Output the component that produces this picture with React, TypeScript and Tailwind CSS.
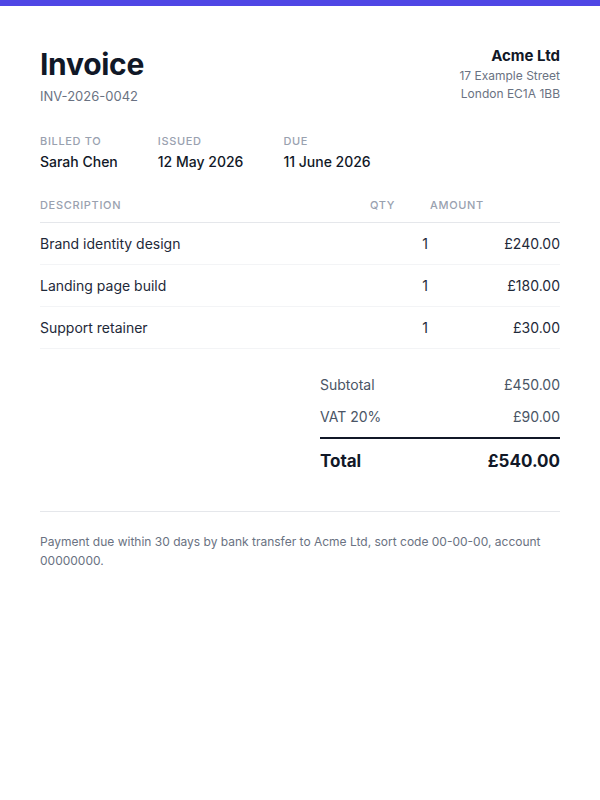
const items = [
  { description: 'Brand identity design', qty: 1, amount: '£240.00' },
  { description: 'Landing page build', qty: 1, amount: '£180.00' },
  { description: 'Support retainer', qty: 1, amount: '£30.00' },
];

const meta = [
  { label: 'Billed to', value: 'Sarah Chen' },
  { label: 'Issued', value: '12 May 2026' },
  { label: 'Due', value: '11 June 2026' },
];

export default function App() {
  return (
    <div className="min-h-screen bg-white font-['Inter',sans-serif] text-[#111827]">
      <div className="h-1.5 bg-[#4f46e5]" />

      <div className="px-10 pt-10">
        {/* Header */}
        <div className="flex justify-between">
          <div>
            <h1 className="text-[30px] leading-9 font-bold tracking-[-0.01em]">Invoice</h1>
            <p className="mt-1 text-[13px] leading-5 text-gray-500">INV-2026-0042</p>
          </div>
          <div className="text-right">
            <p className="text-[15px] leading-5 font-bold">Acme Ltd</p>
            <p className="mt-px text-xs leading-[18px] text-gray-500">
              17 Example Street
              <br />
              London EC1A 1BB
            </p>
          </div>
        </div>

        {/* Meta */}
        <div className="mt-[27px] flex gap-10">
          {meta.map((m) => (
            <div key={m.label}>
              <p className="text-[11px] leading-4 font-medium uppercase tracking-[0.06em] text-gray-400">
                {m.label}
              </p>
              <p className="mt-[3px] text-sm leading-5 font-medium">{m.value}</p>
            </div>
          ))}
        </div>

        {/* Line items */}
        <div className="mt-[25px]">
          <div className="flex border-b border-gray-200 pb-[9px] text-[11px] leading-4 font-medium uppercase tracking-[0.06em] text-gray-400">
            <span className="flex-1">Description</span>
            <span className="w-[60px]">Qty</span>
            <span className="w-[130px]">Amount</span>
          </div>
          {items.map((item) => (
            <div
              key={item.description}
              className="flex border-b border-gray-100 py-[10.5px] text-sm leading-5 text-gray-800"
            >
              <span className="flex-1">{item.description}</span>
              <span className="w-[60px] pr-0.5 text-right">{item.qty}</span>
              <span className="w-[130px] text-right">{item.amount}</span>
            </div>
          ))}
        </div>

        {/* Totals */}
        <div className="mt-5 ml-auto w-[240px]">
          <div className="flex justify-between py-1.5 text-sm leading-5 text-gray-600">
            <span>Subtotal</span>
            <span>£450.00</span>
          </div>
          <div className="flex justify-between py-1.5 text-sm leading-5 text-gray-600">
            <span>VAT 20%</span>
            <span>£90.00</span>
          </div>
          <div className="mt-1 flex items-center justify-between border-t-2 border-[#111827] pt-2 text-[17px] leading-7 font-bold">
            <span>Total</span>
            <span>£540.00</span>
          </div>
        </div>

        {/* Footer */}
        <div className="mt-9 border-t border-gray-200 pt-5">
          <p className="text-xs leading-[19px] text-gray-500">
            Payment due within 30 days by bank transfer to Acme Ltd, sort code 00-00-00, account 00000000.
          </p>
        </div>
      </div>
    </div>
  );
}
